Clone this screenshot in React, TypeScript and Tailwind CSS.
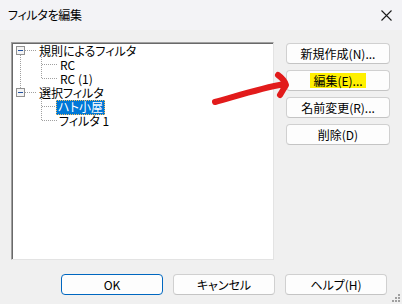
import React from "react";

const font = "font-['Yu_Gothic_UI','Noto_Sans_CJK_JP',sans-serif] [font-feature-settings:'palt']";

function Btn({ children, primary }: { children: React.ReactNode; primary?: boolean }) {
  return (
    <div
      className={`flex h-[21px] items-center justify-center rounded-[4px] border bg-[#fdfdfd] text-[12px] leading-none text-black ${
        primary ? "border-[#0067c0]" : "border-[#d0d0d0] border-b-[#c4c4c4]"
      }`}
    >
      {children}
    </div>
  );
}

function TreeLines() {
  const dot = { stroke: "#a0a0a0", strokeWidth: 1, strokeDasharray: "1 1" };
  return (
    <svg className="pointer-events-none absolute left-0 top-0" width="120" height="100">
      <line x1="8.5" y1="12" x2="8.5" y2="45" {...dot} />
      <line x1="13" y1="7.5" x2="25" y2="7.5" {...dot} />
      <line x1="13" y1="49.5" x2="25" y2="49.5" {...dot} />
      <line x1="29.5" y1="14" x2="29.5" y2="35" {...dot} />
      <line x1="30" y1="21.5" x2="45" y2="21.5" {...dot} />
      <line x1="30" y1="35.5" x2="45" y2="35.5" {...dot} />
      <line x1="29.5" y1="56" x2="29.5" y2="77" {...dot} />
      <line x1="30" y1="63.5" x2="44" y2="63.5" {...dot} />
      <line x1="30" y1="77.5" x2="45" y2="77.5" {...dot} />
      {[3.5, 45.5].map((y) => (
        <g key={y}>
          <rect x="4.5" y={y} width="8" height="8" fill="#f4f4f4" stroke="#919191" />
          <line x1="6" y1={y + 4} x2="11" y2={y + 4} stroke="#2050a0" strokeWidth="1" />
        </g>
      ))}
    </svg>
  );
}

export default function App() {
  return (
    <div className={`relative flex h-[304px] w-[402px] flex-col overflow-hidden bg-[#f0f0f0] ${font}`}>
      <div className="flex h-[30px] items-center justify-between bg-[#f3f3f6] pl-[8px] pr-[10px]">
        <span className="text-[12px] tracking-[-0.3px] text-black">フィルタを編集</span>
        <svg width="11" height="11" viewBox="0 0 11 11">
          <path d="M0.5 0.5 L10.5 10.5 M10.5 0.5 L0.5 10.5" stroke="#1a1a1a" strokeWidth="1.1" />
        </svg>
      </div>

      <div className="flex gap-[12px] pl-[11px] pt-[12px]">
        <div className="relative h-[218px] w-[263px] border border-[#a0a0a0] border-b-[#e3e3e3] border-r-[#e3e3e3] bg-white shadow-[inset_1px_1px_0_#696969]">
          <TreeLines />
          <div className="flex flex-col pt-[1px] text-[12px] leading-[14px] text-black">
            <div className="h-[14px] pl-[27px]">規則によるフィルタ</div>
            <div className="h-[14px] pl-[48px]">RC</div>
            <div className="h-[14px] pl-[48px]">RC (1)</div>
            <div className="h-[14px] pl-[27px]">選択フィルタ</div>
            <div className="h-[14px] pl-[44px]">
              <span className="inline-block h-[15px] bg-[#0078d7] px-[2px] text-white outline outline-1 -outline-offset-1 outline-dotted outline-[#f8c060]">
                ハト小屋
              </span>
            </div>
            <div className="h-[14px] pl-[47px]">フィルタ 1</div>
          </div>
        </div>

        <div className="mt-[1px] flex w-[104px] flex-col gap-[6px]">
          <Btn>新規作成(N)...</Btn>
          <Btn>
            <span className="bg-[#fff000] px-[3px] py-[1px] leading-[13px]">編集(E)...</span>
          </Btn>
          <Btn>名前変更(R)...</Btn>
          <Btn>削除(D)</Btn>
        </div>
      </div>

      <div className="mt-[14px] flex gap-[10px] pl-[61px]">
        <div className="w-[102px]">
          <Btn primary>OK</Btn>
        </div>
        <div className="w-[102px]">
          <Btn>キャンセル</Btn>
        </div>
        <div className="w-[102px]">
          <Btn>ヘルプ(H)</Btn>
        </div>
      </div>

      <svg className="pointer-events-none absolute left-0 top-0" width="402" height="304">
        <path
          d="M215 102 C240 95 262 88 284 84 M278 75 C282 78 285 81 286 85 C284 88 282 92 280 95"
          fill="none"
          stroke="#e21b1b"
          strokeWidth="6"
          strokeLinecap="round"
          strokeLinejoin="round"
        />
      </svg>

      <svg className="absolute bottom-[2px] right-[2px]" width="8" height="8">
        {[
          [6, 0],
          [3, 3],
          [6, 3],
          [0, 6],
          [3, 6],
          [6, 6],
        ].map(([x, y]) => (
          <rect key={`${x}-${y}`} x={x} y={y} width="2" height="2" fill="#a0a0a0" />
        ))}
      </svg>
    </div>
  );
}
